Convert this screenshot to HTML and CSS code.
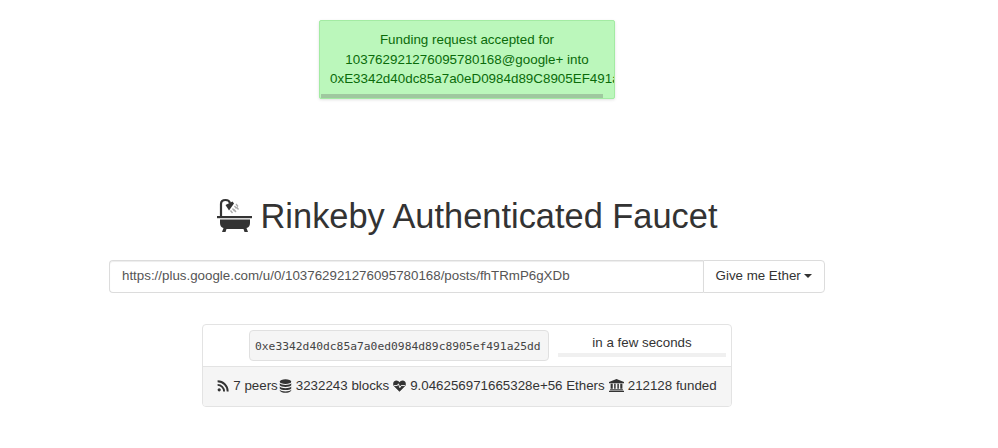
FILE: index.html
```html
<!DOCTYPE html>
<html lang="en">
<head>
    <meta charset="UTF-8">
    <meta name="viewport" content="width=device-width, initial-scale=1.0">
    <title>Rinkeby Authenticated Faucet</title>
    <link rel="stylesheet" href="styles.css">
</head>
<body>
    <!-- notification floats over the page -->
    <div class="notice">
        <p>Funding request accepted for</p>
        <p>103762921276095780168@google+ into</p>
        <p class="notice-address">0xE3342d40dc85a7a0eD0984d89C8905EF491a25dD</p>
        <div class="notice-scroll"></div>
    </div>

    <div class="page">
        <h1 class="title">
            <svg class="bath" viewBox="0 0 36 36" aria-hidden="true">
                <path d="M4 18V6C4 3 6 2 8.500 2S12.500 3 13 5" fill="none" stroke="#333" stroke-width="2.200"/>
                <path d="M8.500 7L15.500 3.500L17 5.500L12 12.500Z" fill="#333"/>
                <path d="M13.500 12.500l2 2.500M15.500 10.500l2 2.500M17.500 8l2 2.500M19 6l2 2.500M17 11.500l2 2.500M19.500 9l2 2.500" stroke="#aaa" stroke-width="1.300"/>
                <rect x="0" y="18" width="35" height="2.200" fill="#333"/>
                <path d="M3 21.500H33V25C33 28 31.500 29.500 29.500 30L31 34H27.500L26.500 31H9.500L8.500 34H5L6.500 30C4.500 29.500 3 28 3 25Z" fill="#333"/>
            </svg>
            Rinkeby Authenticated Faucet
        </h1>

        <div class="input-group">
            <input class="url" type="text" value="https://plus.google.com/u/0/103762921276095780168/posts/fhTRmP6gXDb">
            <button class="give">Give me Ether <span class="caret"></span></button>
        </div>

        <div class="panel">
            <div class="panel-body">
                <code class="address">0xe3342d40dc85a7a0ed0984d89c8905ef491a25dd</code>
                <div class="status">
                    <span>in a few seconds</span>
                    <div class="progress"></div>
                </div>
            </div>
            <div class="panel-footer">
                <svg class="icon" viewBox="0 0 12 12" aria-hidden="true">
                    <circle cx="2.200" cy="9.800" r="1.600" fill="#333"/>
                    <path d="M.6 4.900A6.500 6.500 0 0 1 7.100 11.400M.6 1.300A10.100 10.100 0 0 1 10.700 11.400" fill="none" stroke="#333" stroke-width="1.900"/>
                </svg>
                <span>7 peers</span><svg class="icon tall db" viewBox="0 0 12 12" preserveAspectRatio="none" aria-hidden="true">
                    <ellipse cx="6" cy="2.300" rx="5.300" ry="2" fill="#333"/>
                    <path d="M.7 3.700C2 5.600 10 5.600 11.300 3.700V5.400C10 7.300 2 7.300 .7 5.400ZM.7 6.500C2 8.400 10 8.400 11.300 6.500V8.100C10 10 2 10 .7 8.100ZM.7 9.200C2 11.100 10 11.100 11.300 9.200V9.900C10 12.500 2 12.500 .7 9.900Z" fill="#333"/>
                </svg>
                <span>3232243 blocks</span>
                <svg class="icon tall" viewBox="0 0 12 12" aria-hidden="true">
                    <path d="M6 11.300L.9 6.200C-.7 4.300 .3 1 3.200 1C4.400 1 5.300 1.700 6 2.500C6.700 1.700 7.600 1 8.800 1C11.700 1 12.700 4.300 11.100 6.200Z" fill="#333"/>
                    <path d="M1 5.600H4L5 4L6.300 7.500L7.500 5.600H11" fill="none" stroke="#f5f5f5" stroke-width=".9"/>
                </svg>
                <span>9.046256971665328e+56 Ethers</span>
                <svg class="icon bank" viewBox="0 0 14 12" aria-hidden="true">
                    <path d="M7 0L14 2.800V3.800H0V2.800ZM1.500 4.400H3.500V9H1.500ZM4.800 4.400H6.200V9H4.800ZM7.800 4.400H9.200V9H7.800ZM10.500 4.400H12.500V9H10.500ZM1 9.500H13V10.500H1ZM0 11H14V12H0Z" fill="#333"/>
                </svg>
                <span>212128 funded</span>
            </div>
        </div>
    </div>
</body>
</html>
```

FILE: styles.css
```css
* {
    box-sizing: border-box;
    margin: 0;
    padding: 0;
}

body {
    font-family: "Liberation Sans", Arial, sans-serif;
    font-size: 14px;
    line-height: 20px;
    color: #333;
    background-color: #fff;
}

.notice {
    position: absolute;
    left: 319px;
    top: 20px;
    width: 296px;
    height: 79px;
    padding: 9px 10px 0;
    overflow: hidden;
    background-color: #bbf7bb;
    border: 1px solid #a3eba3;
    border-radius: 2px;
    box-shadow: 0 1px 3px rgba(0,0,0,0.12);
    color: #0a6b0a;
    font-size: 13.400px;
    line-height: 19.500px;
    text-align: center;
    white-space: nowrap;
}

.notice-address {
    text-align: left;
}

.notice-scroll {
    position: absolute;
    left: 1px;
    bottom: 0;
    width: 282px;
    height: 4px;
    background-color: #9fc89f;
}

.page {
    width: 934px;
    padding-top: 193px;
    display: flex;
    flex-direction: column;
    align-items: center;
}

.title {
    display: flex;
    align-items: center;
    gap: 8px;
    font-size: 34.400px;
    font-weight: 400;
    line-height: 46px;
}

.bath {
    width: 36px;
    height: 36px;
}

.input-group {
    display: flex;
    width: 716px;
    height: 33px;
    margin-top: 21px;
}

.url {
    flex: 1;
    padding: 0 12px 2px;
    border: 1px solid #dcdcdc;
    border-right: none;
    border-radius: 4px 0 0 4px;
    box-shadow: inset 0 1px 1px rgba(0,0,0,0.075);
    font-family: inherit;
    font-size: 13.330px;
    color: #555;
}

.give {
    width: 122px;
    padding-bottom: 2px;
    border: 1px solid #dcdcdc;
    border-radius: 0 4px 4px 0;
    background-color: #fff;
    font-family: inherit;
    font-size: 13.330px;
    color: #333;
}

.caret {
    display: inline-block;
    vertical-align: middle;
    border-top: 4px solid #333;
    border-left: 4px solid transparent;
    border-right: 4px solid transparent;
}

.panel {
    width: 530px;
    margin-top: 31px;
    border: 1px solid #e3e3e3;
    border-radius: 4px;
    overflow: hidden;
}

.panel-body {
    display: flex;
    justify-content: flex-end;
    height: 41px;
    padding: 5px 5px 0 0;
}

.address {
    display: block;
    width: 300px;
    height: 31px;
    padding: 0 5px;
    background-color: #f5f5f5;
    border: 1px solid #e0e0e0;
    border-radius: 4px;
    font-family: "DejaVu Sans Mono", "Liberation Mono", monospace;
    font-size: 11.300px;
    line-height: 31px;
    color: #444;
}

.status {
    width: 168px;
    margin-left: 9px;
    font-size: 13.330px;
    line-height: 16px;
    text-align: center;
    padding-top: 5px;
}

.progress {
    height: 4px;
    margin-top: 2px;
    background-color: #f0f0f0;
}

.panel-footer {
    display: flex;
    align-items: center;
    justify-content: center;
    height: 40px;
    padding-bottom: 2px;
    background-color: #f5f5f5;
    border-top: 1px solid #e3e3e3;
    font-size: 13.330px;
    gap: 4px;
    white-space: nowrap;
}

.icon {
    width: 12px;
    height: 12px;
    flex: none;
}

.tall {
    width: 13px;
    height: 14px;
}

.bank {
    width: 15px;
    height: 13px;
}

.db {
    margin-left: -3px;
}
```
